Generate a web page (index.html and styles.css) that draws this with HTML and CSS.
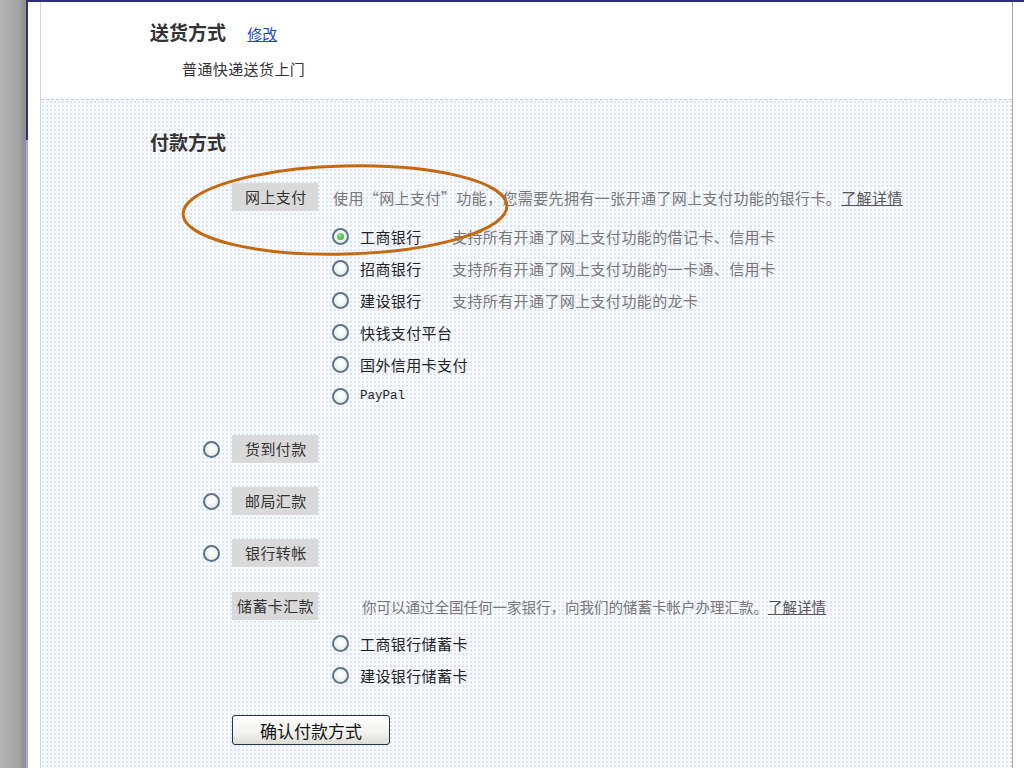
FILE: index.html
```html
<!DOCTYPE html>
<html lang="zh-CN">
<head>
  <meta charset="UTF-8">
  <title>付款方式</title>
  <link rel="stylesheet" href="styles.css">
</head>
<body>
  <div class="shell">
    <div class="sidebar"></div>
    <div class="edge"></div>
    <div class="frame">
      <div class="panel">
        <section class="ship">
          <h2 class="title">送货方式 <a href="#" class="edit">修改</a></h2>
          <p class="ship-desc">普通快递送货上门</p>
        </section>

        <section class="pay">
          <h2 class="title">付款方式</h2>

          <div class="method online">
            <span class="tag">网上支付</span>
            <span class="desc">使用“网上支付”功能，您需要先拥有一张开通了网上支付功能的银行卡。<a href="#" class="more">了解详情</a></span>
          </div>
          <div class="options">
            <label class="opt"><input type="radio" name="pay" checked><span class="name">工商银行</span><span class="desc">支持所有开通了网上支付功能的借记卡、信用卡</span></label>
            <label class="opt"><input type="radio" name="pay"><span class="name">招商银行</span><span class="desc">支持所有开通了网上支付功能的一卡通、信用卡</span></label>
            <label class="opt"><input type="radio" name="pay"><span class="name">建设银行</span><span class="desc">支持所有开通了网上支付功能的龙卡</span></label>
            <label class="opt"><input type="radio" name="pay"><span class="name">快钱支付平台</span></label>
            <label class="opt"><input type="radio" name="pay"><span class="name">国外信用卡支付</span></label>
            <label class="opt"><input type="radio" name="pay"><span class="name latin">PayPal</span></label>
          </div>

          <label class="method single first"><input type="radio" name="pay"><span class="tag">货到付款</span></label>
          <label class="method single"><input type="radio" name="pay"><span class="tag">邮局汇款</span></label>
          <label class="method single"><input type="radio" name="pay"><span class="tag">银行转帐</span></label>

          <div class="method deposit">
            <span class="tag">储蓄卡汇款</span>
            <span class="desc">你可以通过全国任何一家银行，向我们的储蓄卡帐户办理汇款。<a href="#" class="more">了解详情</a></span>
          </div>
          <div class="options tight">
            <label class="opt"><input type="radio" name="pay"><span class="name">工商银行储蓄卡</span></label>
            <label class="opt"><input type="radio" name="pay"><span class="name">建设银行储蓄卡</span></label>
          </div>

          <button class="confirm">确认付款方式</button>

          <!-- hand-drawn highlight over the online payment row -->
          <svg class="mark" width="340" height="100" viewBox="0 0 340 100">
            <ellipse cx="170" cy="50" rx="162" ry="44" fill="none" stroke="#c4690f" stroke-width="3" transform="rotate(-1.5 170 50)"/>
          </svg>
        </section>
      </div>
    </div>
    <div class="gutter"></div>
  </div>
</body>
</html>
```

FILE: styles.css
```css
* {
  box-sizing: border-box;
}

html, body {
  margin: 0;
  height: 100%;
  overflow: hidden;
}

body {
  font-family: "Noto Sans CJK SC", "Noto Sans", sans-serif;
  font-size: 15px;
  letter-spacing: 0.4px;
  color: #222;
  background: #fff;
}

.shell {
  display: flex;
  height: 768px;
}

.sidebar {
  width: 26px;
  background: linear-gradient(to right, #b4b4b4, #a4a4a4 70%, #8e8e8e);
}

.edge {
  width: 2px;
  background: linear-gradient(to bottom, #2f2f86 0, #2f2f86 140px, #a8a8e0 140px);
}

.frame {
  flex: 1;
  display: flex;
  padding-left: 12px;
  border-top: 2px solid #2f2f7a;
}

.panel {
  flex: 1;
  display: flex;
  flex-direction: column;
  border-left: 1px solid #d4d4d4;
  border-right: 1px solid #a8a8a8;
}

.gutter {
  width: 11px;
  border-top: 2px solid #2f2f7a;
}

.title {
  margin: 0;
  font-size: 19px;
  line-height: 24px;
  font-weight: bold;
  letter-spacing: 0;
  color: #333;
}

.edit {
  margin-left: 17px;
  font-size: 15px;
  font-weight: normal;
  color: #2348c4;
}

/* shipping */
.ship {
  height: 97px;
  padding: 18px 0 0 109px;
}

.ship-desc {
  margin: 13px 0 0 32px;
  line-height: 20px;
  color: #333;
}

/* payment */
.pay {
  position: relative;
  flex: 1;
  padding: 30px 0 0 109px;
  border-top: 1px dashed #c8c8c8;
  background-color: #f8fafd;
  background-image: radial-gradient(circle, #dbe3f1 0.9px, transparent 1.3px);
  background-size: 4px 4px;
}

.method {
  display: flex;
  align-items: center;
  height: 28px;
}

.tag {
  flex: none;
  width: 86px;
  height: 28px;
  line-height: 28px;
  padding-left: 13px;
  background: #d9d9d9;
  color: #333;
  white-space: nowrap;
}

.desc {
  color: #777;
  white-space: nowrap;
}

.more {
  color: #555;
  text-decoration: underline;
}

.online {
  margin: 29px 0 0 82px;
}

.online .desc {
  margin-left: 15px;
}

.deposit {
  margin: 25px 0 0 82px;
}

.deposit .tag {
  padding-left: 5px;
}

.deposit .desc {
  margin-left: 44px;
  font-size: 14.5px;
  letter-spacing: 0;
}

.single {
  gap: 12px;
  margin: 24px 0 0 53px;
}

.single.first {
  margin-top: 23px;
}

.options {
  display: flex;
  flex-direction: column;
  margin: 9px 0 0 182px;
}

.options.tight {
  margin-top: 7px;
}

.opt {
  display: flex;
  align-items: center;
  gap: 11px;
  height: 32px;
}

.opt .name {
  min-width: 81px;
  color: #222;
}

.opt .latin {
  font-family: "Liberation Mono", monospace;
  font-size: 12.5px;
  letter-spacing: 0;
}

input[type="radio"] {
  appearance: none;
  flex: none;
  width: 17px;
  height: 17px;
  margin: 0;
  border: 2px solid #5a7594;
  border-radius: 50%;
  background: radial-gradient(circle at 50% 40%, #fff, #e8e7dc);
  display: grid;
  place-content: center;
}

input[type="radio"]:checked::after {
  content: "";
  width: 7px;
  height: 7px;
  border-radius: 50%;
  background: radial-gradient(circle at 40% 35%, #8ee88e, #1fa31f);
}

.confirm {
  display: block;
  width: 158px;
  height: 30px;
  margin: 24px 0 0 82px;
  padding: 0;
  font-family: inherit;
  font-size: 17px;
  color: #111;
  border: 1px solid #22344e;
  border-radius: 3px;
  background: linear-gradient(to bottom, #ffffff, #f2f2ee 60%, #dcdcd4);
}

.mark {
  position: absolute;
  left: 134px;
  top: 60px;
  pointer-events: none;
}
```
